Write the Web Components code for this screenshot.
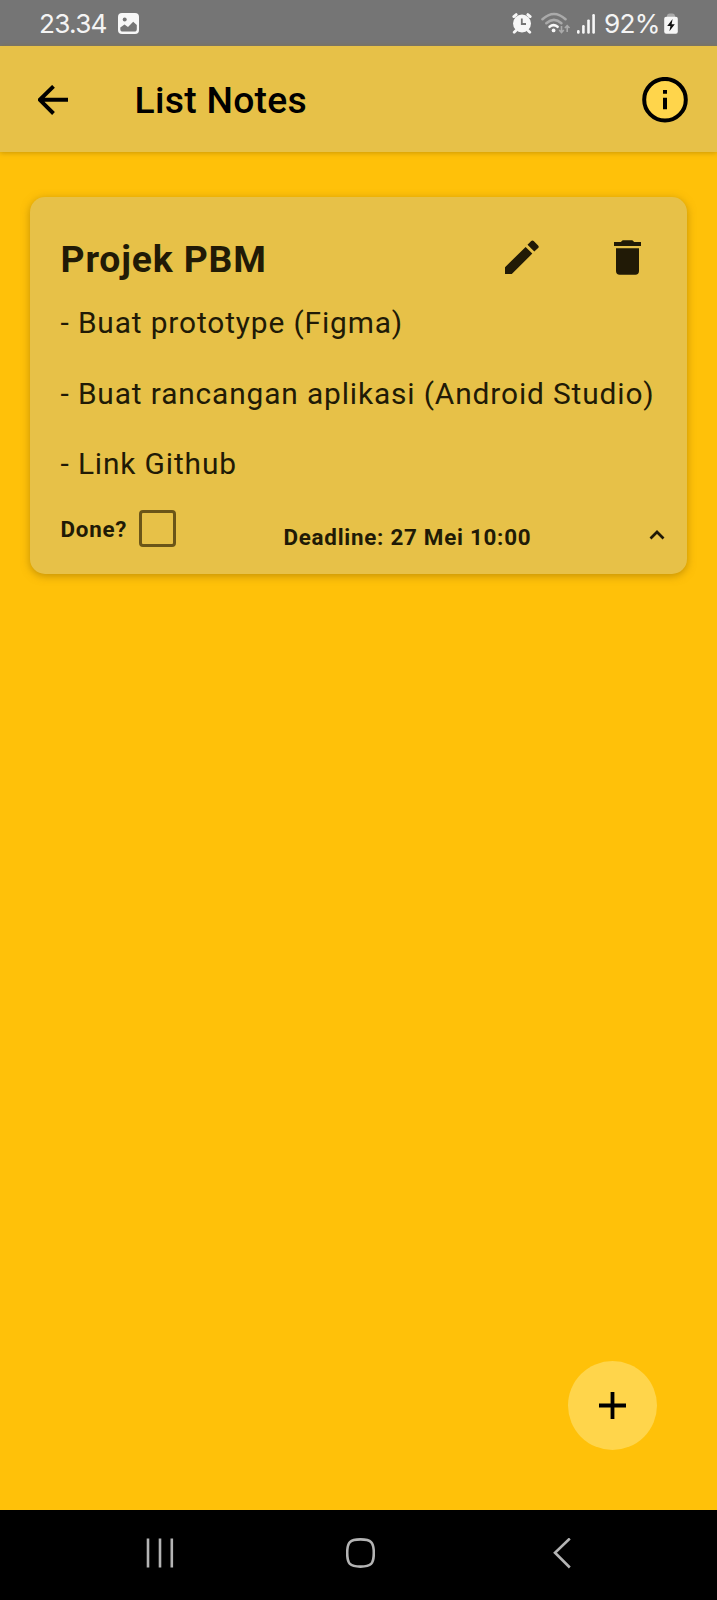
<!DOCTYPE html>
<html lang="id">
<head>
<meta charset="utf-8">
<title>List Notes</title>
<style>
html,body{margin:0;padding:0}
body{width:717px;height:1600px;overflow:hidden;background:#ffc109;font-family:Roboto,"Liberation Sans",sans-serif}
</style>
</head>
<body>
<notes-app></notes-app>
<script>
const define = (name, html) => customElements.define(name, class extends HTMLElement {
  constructor() {
    super();
    this.attachShadow({ mode: 'open' }).innerHTML = html;
  }
});

define('status-bar', `
<style>
:host{display:flex;align-items:center;justify-content:space-between;box-sizing:border-box;height:46px;padding:1px 39px 0 39px;background:#757575;color:#f4f4f4;font:400 26.2px/46px Inter,sans-serif}
div{display:flex;align-items:center;height:46px}
.time{width:68px;letter-spacing:-.75px;white-space:nowrap}
.pct{width:60px;letter-spacing:-.7px;white-space:nowrap}
svg{display:block;flex:none}
</style>
<div><span class="time">23.34</span>
<svg style="margin-left:11px" width="21" height="21" viewBox="0 0 21 21"><rect width="21" height="21" rx="4" fill="#f7f7f7"/><circle cx="6.7" cy="6.6" r="2" fill="#757575"/><path d="M2.3 14.6 6.5 11.4 10 14 15.2 8.8 18.8 12V16Q18.8 18.6 16.2 18.6H4.8Q2.3 18.6 2.3 16Z" fill="#757575"/></svg></div>
<div>
<svg width="20" height="21" viewBox="0 0 20 21"><g stroke="#f7f7f7" stroke-width="2.8" stroke-linecap="round"><path d="M1.8 3.6 4.2 1.6M18.2 3.6 15.8 1.6M4 17.4 2.2 19.2M16 17.4 17.8 19.2"/></g><circle cx="10" cy="10.5" r="9" fill="#f7f7f7"/><path d="M9.8 5.4V11H14" fill="none" stroke="#757575" stroke-width="1.8"/></svg>
<svg style="margin-left:9px" width="30" height="23" viewBox="0 0 30 23"><g fill="none" stroke-width="2.6" stroke-linecap="round"><path d="M1.5 7.2Q13 -3.2 24.5 7.2" stroke="#aaa"/><path d="M5.3 11.2Q13 4.6 20.4 11.2" stroke="#aaa"/><path d="M8.6 14.8Q12.5 11.5 16.6 14.8" stroke="#f7f7f7"/></g><circle cx="12.6" cy="18.4" r="1.9" fill="#f7f7f7"/><path d="M20.5 14V20M18.2 18 20.5 20.5 22.8 18M26.2 20V14M23.9 16 26.2 13.6 28.5 16" fill="none" stroke="#aaa" stroke-width="1.6"/></svg>
<svg style="margin-left:6px" width="19" height="20" viewBox="0 0 19 20" fill="#f7f7f7"><rect x="0" y="16" width="2.6" height="3.7" rx="1.2"/><rect x="5.1" y="11" width="2.6" height="8.7" rx="1.2"/><rect x="10.2" y="5.4" width="2.6" height="14.3" rx="1.2"/><rect x="15.3" y="0" width="2.6" height="19.7" rx="1.2"/></svg>
<span class="pct" style="margin-left:8.5px">92%</span>
<svg width="14" height="21" viewBox="0 0 14 21"><path d="M3 4V2.6Q3.4 .5 5.6.5H8.4Q10.6.5 11 2.6V4Z" fill="#aaa"/><rect x=".2" y="3.8" width="13.6" height="17" rx="2" fill="#f7f7f7"/><path d="M8.6 6 3.2 13H6.4L5.4 18.2 10.8 11.2H7.6Z" fill="#111"/></svg>
</div>`);

define('app-bar', `
<style>
:host{display:flex;align-items:center;box-sizing:border-box;height:106px;padding:2px 29px 0 38px;background:#e7c148;position:relative;box-shadow:0 1px 5px #9a700080}
svg{display:block;flex:none}
h1{flex:1;margin:0 0 0 65.5px;font:500 37.3px/44px Roboto,sans-serif;letter-spacing:.28px;color:#000}
</style>
<svg width="31" height="30" viewBox="0 0 31 30"><path d="M15.5 1.3 1.8 14.8 15.5 28.5M2 14.8H30" fill="none" stroke="#000" stroke-width="3.9"/></svg>
<h1><slot></slot></h1>
<svg width="46" height="46" viewBox="0 0 46 46"><circle cx="23" cy="22.7" r="20.8" fill="#ffd54b" stroke="#000" stroke-width="4"/><path d="M21 13H25V16.8H21ZM21 20.7H25V32.3H21Z" fill="#000"/></svg>`);

define('note-card', `
<style>
:host{display:block;box-sizing:border-box;width:657px;height:377.5px;margin:44.5px 0 0 30px;padding:38px 20px 0 30.5px;border-radius:15px;background:#e7c148;color:#211a06;box-shadow:0 2px 9px #8c650088}
header{display:flex;align-items:flex-start;height:48px}
h2{flex:1;margin:2px 0 0;font:700 37.3px/44px Roboto,sans-serif;letter-spacing:.85px;white-space:nowrap}
svg{display:block;flex:none}
.body{margin-top:5.9px;font:400 29.87px/70.4px Roboto,sans-serif;letter-spacing:.87px;white-space:nowrap;height:212px}
footer{display:flex;align-items:flex-start;height:60px;margin-top:4.6px;font:700 22.4px/28px Roboto,sans-serif;letter-spacing:.73px;white-space:nowrap}
.done{width:78.5px;padding-top:10px}
.box{box-sizing:border-box;width:37px;height:37px;margin-top:5px;border:3px solid #6b5518;border-radius:4px}
.dead{margin-left:107.5px;padding-top:18px;flex:1}
</style>
<header><h2><slot name="title"></slot></h2>
<svg width="36" height="36" viewBox="0 0 36 36" style="margin:4.5px 74px 0 0"><path d="M1 28.3V35H7.8L28.3 14.6 21.6 7.9ZM34.1 9.1Q35.4 7.9 34.1 6.6L29.7 2Q28.4.8 27.2 2L23.5 5.8 30.3 12.6Z" fill="#211a06"/></svg>
<svg width="27" height="35" viewBox="0 0 27 35" style="margin:5px 26px 0 0"><path d="M2 31Q2 34.7 5.7 34.7H21.3Q25 34.7 25 31V8.3H2ZM27 2H20.2L18.3.3H8.7L6.8 2H0V6H27Z" fill="#211a06"/></svg>
</header>
<div class="body"><slot></slot></div>
<footer><span class="done">Done?</span><span class="box"></span><span class="dead"><slot name="deadline"></slot></span>
<svg width="16" height="10" viewBox="0 0 16 10" style="margin:25.5px 2px 0 0"><path d="M1.5 8.5 8 2 14.5 8.5" fill="none" stroke="#211a06" stroke-width="2.7"/></svg>
</footer>`);

define('add-button', `
<style>
:host{display:flex;align-items:center;justify-content:center;width:89px;height:89px;border-radius:50%;background:#ffd54b}
</style>
<svg width="27" height="27" viewBox="0 0 27 27"><path d="M13.5 0V27M0 13.5H27" stroke="#000" stroke-width="3.8"/></svg>`);

define('nav-bar', `
<style>
:host{display:flex;align-items:flex-start;box-sizing:border-box;height:90px;padding:28px 0 0 146px;background:#000}
svg{display:block;flex:none}
g{fill:none;stroke:#b4b4b4;stroke-width:2.6}
</style>
<svg width="28" height="30" viewBox="0 0 28 30"><g><path d="M2 .5V29.5M14 .5V29.5M25.8 .5V29.5"/></g></svg>
<svg style="margin-left:172px" width="29" height="30" viewBox="0 0 29 30"><g><path d="M14.5 1.4C25 1.4 27.8 4 27.8 15S25 28.6 14.5 28.6 1.2 26 1.2 15 4 1.4 14.5 1.4Z"/></g></svg>
<svg style="margin-left:177.5px" width="18" height="31" viewBox="0 0 18 31"><g><path d="M16.8 .5 2 14.7 16.8 29.5"/></g></svg>`);

define('notes-app', `
<style>
:host{display:flex;flex-direction:column;width:717px;height:1600px;background:#ffc109}
main{flex:1;display:flex;flex-direction:column}
add-button{margin:auto 60px 60px auto}
p{margin:0}
</style>
<status-bar></status-bar>
<app-bar>List Notes</app-bar>
<main>
<note-card><span slot="title">Projek PBM</span><p>- Buat prototype (Figma)</p><p>- Buat rancangan aplikasi (Android Studio)</p><p>- Link Github</p><span slot="deadline">Deadline: 27 Mei 10:00</span></note-card>
<add-button></add-button>
</main>
<nav-bar></nav-bar>`);
</script>
</body>
</html>
